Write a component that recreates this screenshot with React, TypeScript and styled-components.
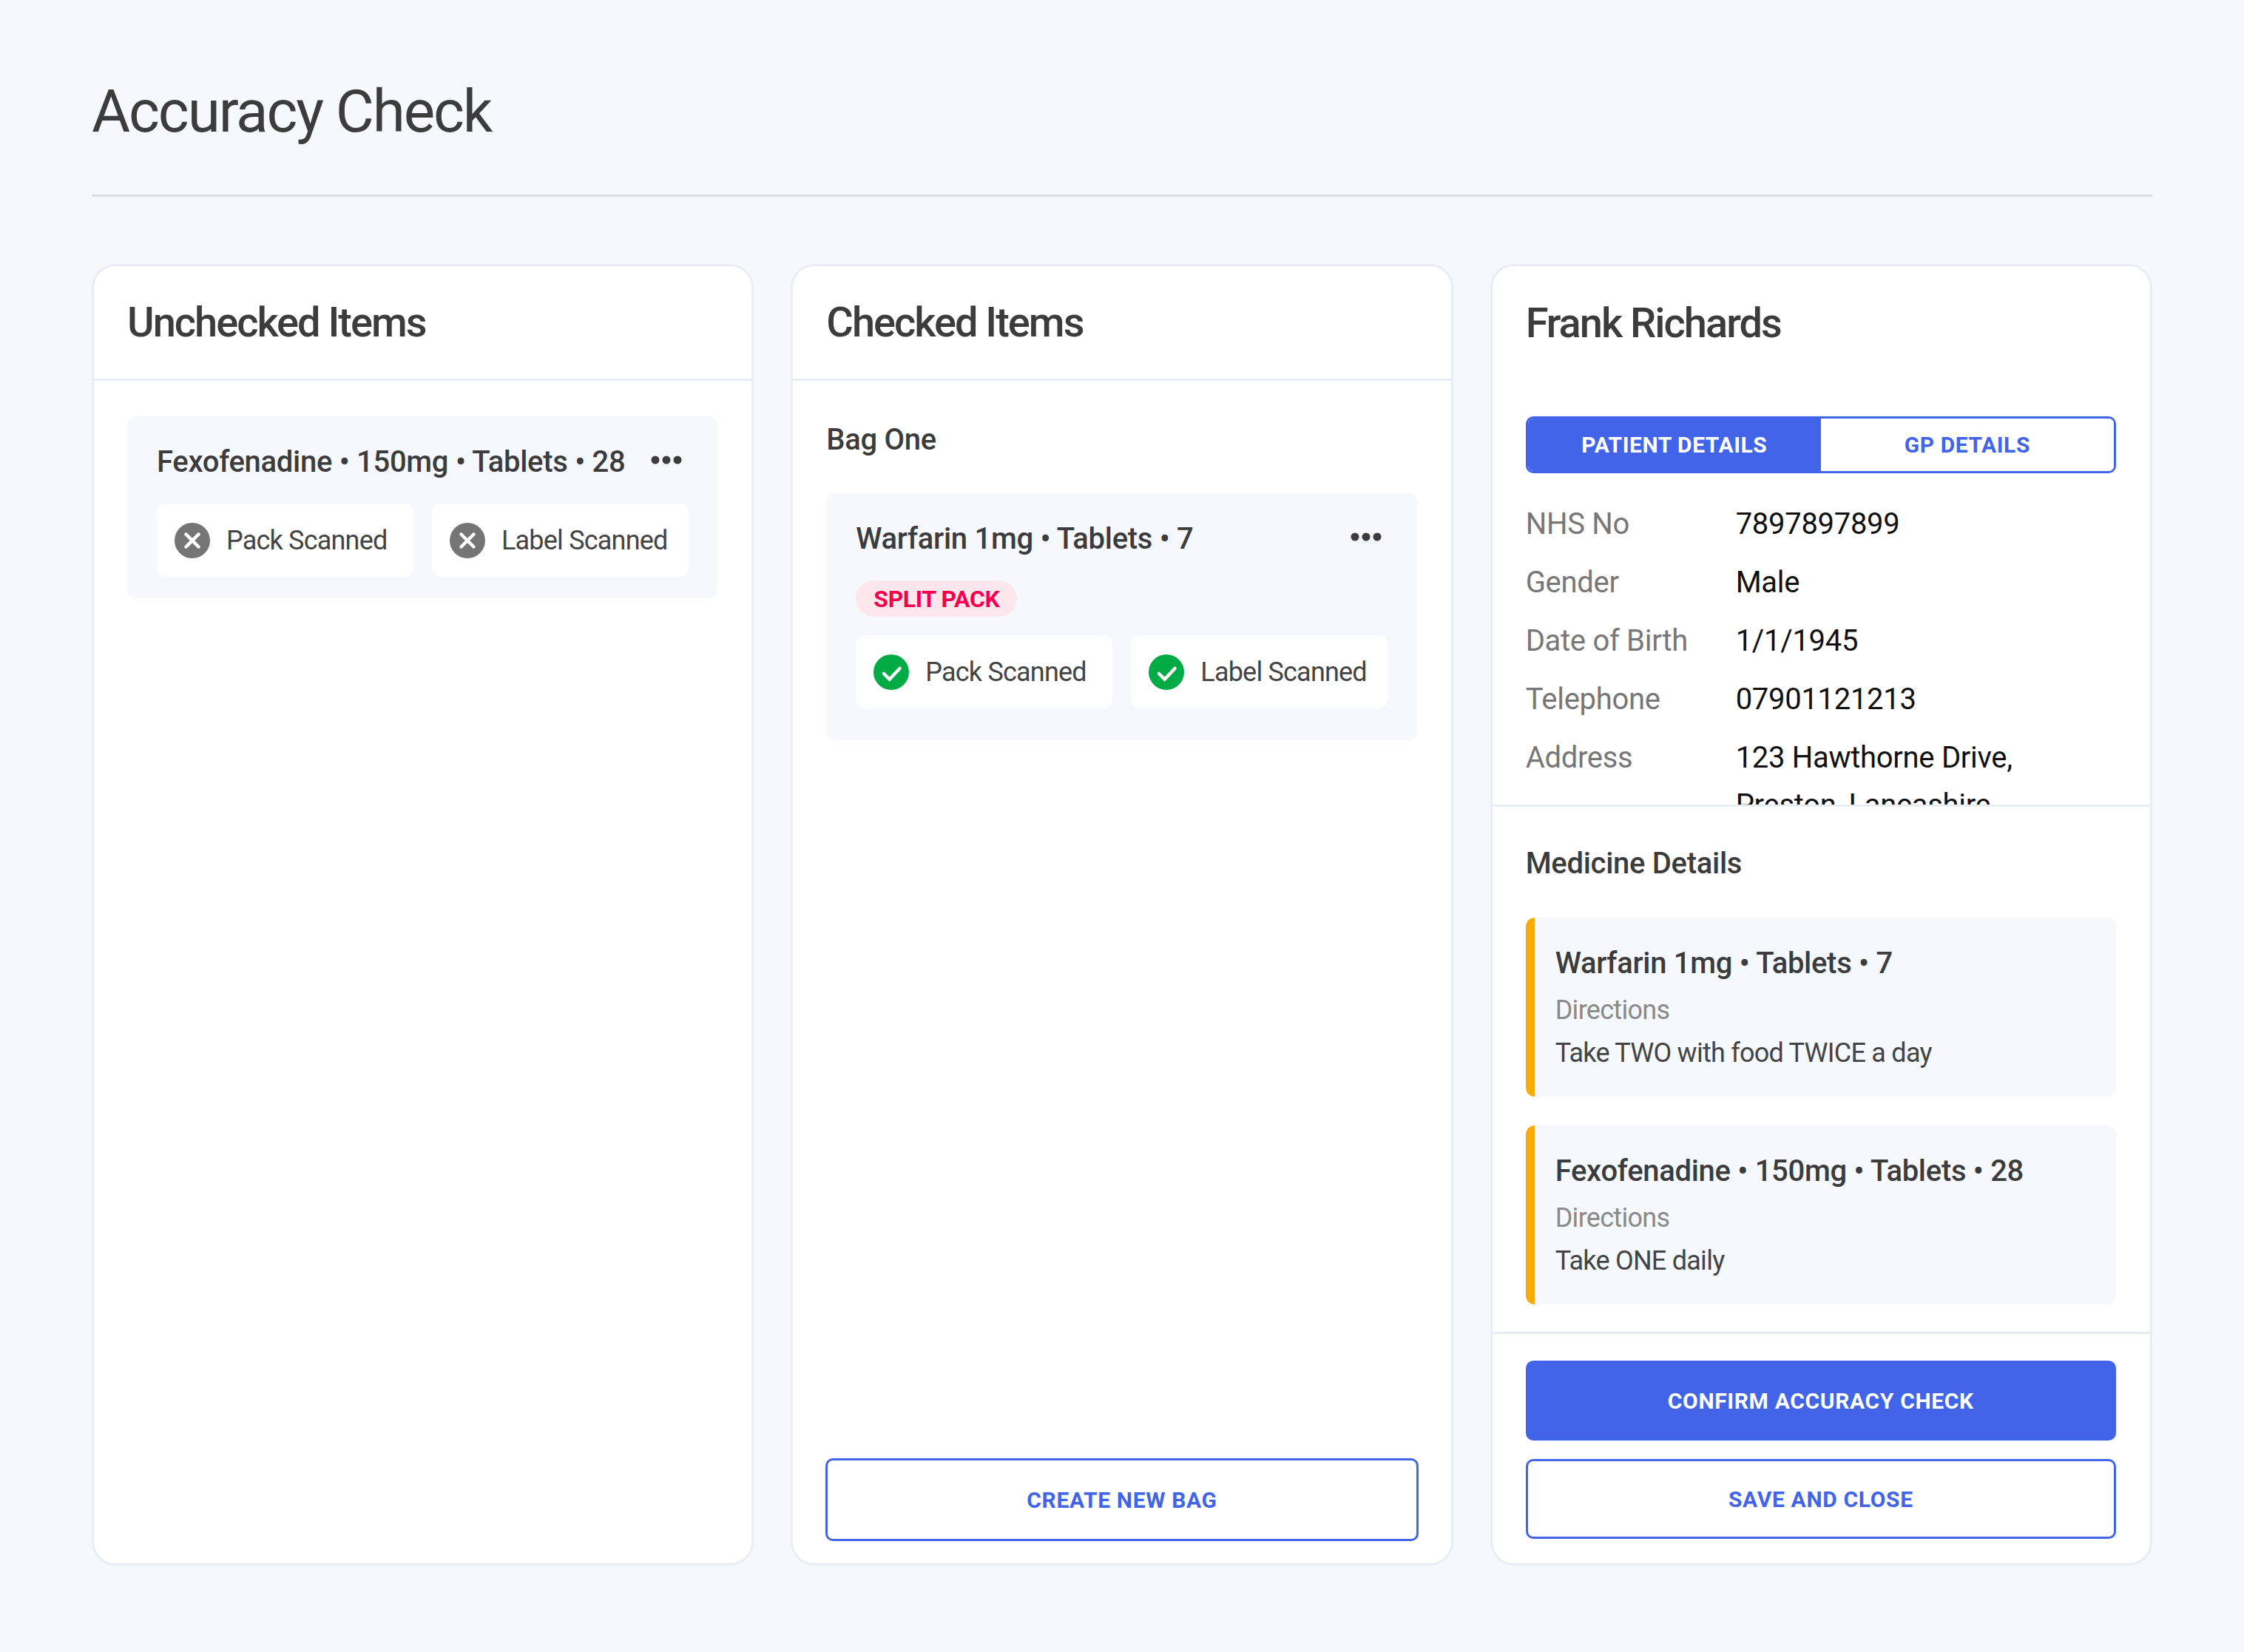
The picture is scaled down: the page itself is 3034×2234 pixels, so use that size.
import { Fragment } from 'react';
import styled, { createGlobalStyle } from 'styled-components';

const GlobalStyle = createGlobalStyle`
    * { box-sizing: border-box; }
    html, body { margin: 0; padding: 0; background: #f5f8fd; }
    body { font-family: Roboto, "Liberation Sans", sans-serif; color: #3c3c3c; }
`;

const Page = styled.div`
    width: 3034px;
    height: 2234px;
    padding: 96px 124px 0;
    display: flex;
    flex-direction: column;
    overflow: hidden;
`;

const PageTitle = styled.h1`
    margin: 0;
    font-size: 80px;
    line-height: 110px;
    font-weight: 400;
    letter-spacing: -2.1px;
    color: #3c3c3c;
`;

const Rule = styled.hr`
    width: 100%;
    margin: 57px 0 91px;
    border: 0;
    height: 3px;
    background: #dcdedf;
`;

const Columns = styled.main`
    display: grid;
    grid-template-columns: repeat(3, 1fr);
    gap: 50px;
    height: 1760px;
`;

const Card = styled.section`
    display: flex;
    flex-direction: column;
    min-width: 0;
    min-height: 0;
    background: #fff;
    border: 3px solid #e9edf6;
    border-radius: 32px;
    overflow: hidden;
`;

const CardHead = styled.header<{ $plain?: boolean }>`
    flex: none;
    height: ${p => (p.$plain ? '203px' : '155px')};
    padding: ${p => (p.$plain ? '41px' : '0')} 45px 0;
    display: flex;
    align-items: ${p => (p.$plain ? 'flex-start' : 'center')};
    border-bottom: ${p => (p.$plain ? '0' : '3px solid #e9edf6')};
`;

const CardTitle = styled.h2`
    margin: 0;
    font-size: 56px;
    line-height: 72px;
    font-weight: 500;
    letter-spacing: -2px;
    color: #3c3c3c;
`;

const CardBody = styled.div`
    flex: 1;
    min-height: 0;
    display: flex;
    flex-direction: column;
    padding: 48px 46px 30px 45px;
`;

const BagName = styled.h3`
    margin: 3px 0 43px;
    font-size: 40px;
    line-height: 58px;
    font-weight: 500;
    letter-spacing: -0.3px;
    color: #3c3c3c;
`;

const Item = styled.article<{ $tail: number }>`
    padding: 38px 40px ${p => p.$tail}px;
    background: #f5f8fd;
    border-radius: 12px;
`;

const ItemHead = styled.div`
    display: flex;
    align-items: center;
    justify-content: space-between;
    height: 48px;
`;

const ItemName = styled.span`
    font-size: 40px;
    line-height: 48px;
    font-weight: 500;
    letter-spacing: -0.3px;
    color: #3c3c3c;
`;

const Dots = styled.svg`
    flex: none;
    width: 44px;
    height: 14px;
    margin: -6px 7px 0 0;
    fill: #3c3c3c;
`;

const Badge = styled.div`
    width: fit-content;
    height: 49px;
    margin-top: 32px;
    padding: 0 24px;
    display: flex;
    align-items: center;
    font-size: 32px;
    font-weight: 700;
    letter-spacing: -0.4px;
    color: #f5004f;
    background: #fde6ec;
    border-radius: 25px;
`;

const Chips = styled.div<{ $gap: number }>`
    display: grid;
    grid-template-columns: 347px 347px;
    gap: 25px;
    margin-top: ${p => p.$gap}px;
`;

const Chip = styled.div`
    height: 99px;
    padding: 0 24px;
    display: flex;
    align-items: center;
    gap: 22px;
    background: #fff;
    border-radius: 12px;
    font-size: 36px;
    letter-spacing: -0.8px;
    white-space: nowrap;
    color: #444;
`;

const ChipIcon = styled.svg`
    flex: none;
    width: 48px;
    height: 48px;
`;

const Button = styled.button<{ $solid?: boolean; $height: number }>`
    display: block;
    width: 100%;
    height: ${p => p.$height}px;
    border: 3px solid #4164e9;
    border-radius: 10px;
    background: ${p => (p.$solid ? '#4164e9' : '#fff')};
    color: ${p => (p.$solid ? '#fff' : '#4164e9')};
    font-family: inherit;
    font-size: 30px;
    font-weight: 700;
    letter-spacing: 0.65px;
`;

const BagButton = styled(Button)`
    width: calc(100% + 3px);
    margin: auto 0 0 -1px;
`;

const PatientTop = styled.div`
    flex: none;
    height: 731px;
    overflow: hidden;
    border-bottom: 3px solid #e9edf6;
`;

const Toggle = styled.div`
    display: grid;
    grid-template-columns: 1fr 1fr;
    height: 77px;
    margin: 0 46px 0 45px;
    border: 3px solid #4164e9;
    border-radius: 10px;
    overflow: hidden;
`;

const ToggleOption = styled.div<{ $active?: boolean }>`
    display: flex;
    align-items: center;
    justify-content: center;
    font-size: 30px;
    font-weight: 700;
    letter-spacing: 0.55px;
    background: ${p => (p.$active ? '#4164e9' : '#fff')};
    color: ${p => (p.$active ? '#fff' : '#4164e9')};
`;

const Details = styled.dl`
    display: grid;
    grid-template-columns: 284px 1fr;
    row-gap: 15px;
    margin: 37px 46px 0 45px;
    font-size: 40px;
    line-height: 64px;
    letter-spacing: -0.3px;
`;

const DetailLabel = styled.dt`
    color: #777;
`;

const DetailValue = styled.dd`
    margin: 0;
    color: #111;
`;

const MedicineSection = styled.div`
    flex: none;
    height: 713px;
    padding: 48px 46px 0 45px;
    border-bottom: 3px solid #e9edf6;
`;

const SectionTitle = styled.h3`
    margin: 0 0 44px;
    font-size: 40px;
    line-height: 58px;
    font-weight: 500;
    letter-spacing: -0.3px;
    color: #3c3c3c;
`;

const Medicine = styled.article`
    height: 242px;
    margin-bottom: 39px;
    padding: 38px 40px 0 28px;
    background: #f5f8fd;
    border-left: 12px solid #f9ab0a;
    border-radius: 12px;
`;

const MedicineName = styled.div`
    font-size: 40px;
    line-height: 48px;
    font-weight: 500;
    letter-spacing: -0.3px;
    color: #3c3c3c;
`;

const DirectionsLabel = styled.div`
    margin-top: 17px;
    font-size: 36px;
    line-height: 44px;
    letter-spacing: -0.7px;
    color: #8a8a8a;
`;

const DirectionsText = styled.div`
    margin-top: 14px;
    font-size: 36px;
    line-height: 44px;
    letter-spacing: -0.75px;
    color: #444;
`;

const Actions = styled.footer`
    flex: 1;
    display: flex;
    flex-direction: column;
    gap: 25px;
    padding: 36px 46px 0 45px;
`;

const MoreDots = () => (
    <Dots viewBox="0 0 44 14">
        <circle cx="7" cy="7" r="5.5" />
        <circle cx="22" cy="7" r="5.5" />
        <circle cx="37" cy="7" r="5.5" />
    </Dots>
);

const ScanIcon = ({ done }: { done: boolean }) => (
    <ChipIcon viewBox="0 0 48 48">
        <circle cx="24" cy="24" r="24" fill={done ? '#00ab45' : '#757575'} />
        {done ? (
            <path d="M14 26l7.7 7.5L35.5 19" fill="none" stroke="#fff" strokeWidth="4.5" strokeLinecap="round" strokeLinejoin="miter" />
        ) : (
            <path d="M15.5 15.5l17 17M32.5 15.5l-17 17" fill="none" stroke="#fff" strokeWidth="4.5" strokeLinecap="round" />
        )}
    </ChipIcon>
);

const ScanChips = ({ done, gap }: { done: boolean; gap: number }) => (
    <Chips $gap={gap}>
        <Chip><ScanIcon done={done} />Pack Scanned</Chip>
        <Chip><ScanIcon done={done} />Label Scanned</Chip>
    </Chips>
);

const patient = [
    ['NHS No', '7897897899'],
    ['Gender', 'Male'],
    ['Date of Birth', '1/1/1945'],
    ['Telephone', '07901121213'],
];

const medicines = [
    { name: 'Warfarin 1mg • Tablets • 7', directions: 'Take TWO with food TWICE a day' },
    { name: 'Fexofenadine • 150mg • Tablets • 28', directions: 'Take ONE daily' },
];

const App = () => (
    <Page>
        <GlobalStyle />
        <PageTitle>Accuracy Check</PageTitle>
        <Rule />
        <Columns>
            <Card>
                <CardHead><CardTitle>Unchecked Items</CardTitle></CardHead>
                <CardBody>
                    <Item $tail={29}>
                        <ItemHead>
                            <ItemName>Fexofenadine • 150mg • Tablets • 28</ItemName>
                            <MoreDots />
                        </ItemHead>
                        <ScanChips done={false} gap={32} />
                    </Item>
                </CardBody>
            </Card>
            <Card>
                <CardHead><CardTitle>Checked Items</CardTitle></CardHead>
                <CardBody>
                    <BagName>Bag One</BagName>
                    <Item $tail={43}>
                        <ItemHead>
                            <ItemName>Warfarin 1mg • Tablets • 7</ItemName>
                            <MoreDots />
                        </ItemHead>
                        <Badge>SPLIT PACK</Badge>
                        <ScanChips done gap={25} />
                    </Item>
                    <BagButton $height={112}>CREATE NEW BAG</BagButton>
                </CardBody>
            </Card>
            <Card>
                <PatientTop>
                    <CardHead $plain><CardTitle>Frank Richards</CardTitle></CardHead>
                    <Toggle>
                        <ToggleOption $active>PATIENT DETAILS</ToggleOption>
                        <ToggleOption>GP DETAILS</ToggleOption>
                    </Toggle>
                    <Details>
                        {patient.map(([label, value]) => (
                            <Fragment key={label}>
                                <DetailLabel>{label}</DetailLabel>
                                <DetailValue>{value}</DetailValue>
                            </Fragment>
                        ))}
                        <DetailLabel>Address</DetailLabel>
                        <DetailValue>123 Hawthorne Drive,<br />Preston, Lancashire</DetailValue>
                    </Details>
                </PatientTop>
                <MedicineSection>
                    <SectionTitle>Medicine Details</SectionTitle>
                    {medicines.map(m => (
                        <Medicine key={m.name}>
                            <MedicineName>{m.name}</MedicineName>
                            <DirectionsLabel>Directions</DirectionsLabel>
                            <DirectionsText>{m.directions}</DirectionsText>
                        </Medicine>
                    ))}
                </MedicineSection>
                <Actions>
                    <Button $solid $height={108}>CONFIRM ACCURACY CHECK</Button>
                    <Button $height={108}>SAVE AND CLOSE</Button>
                </Actions>
            </Card>
        </Columns>
    </Page>
);

export default App;
